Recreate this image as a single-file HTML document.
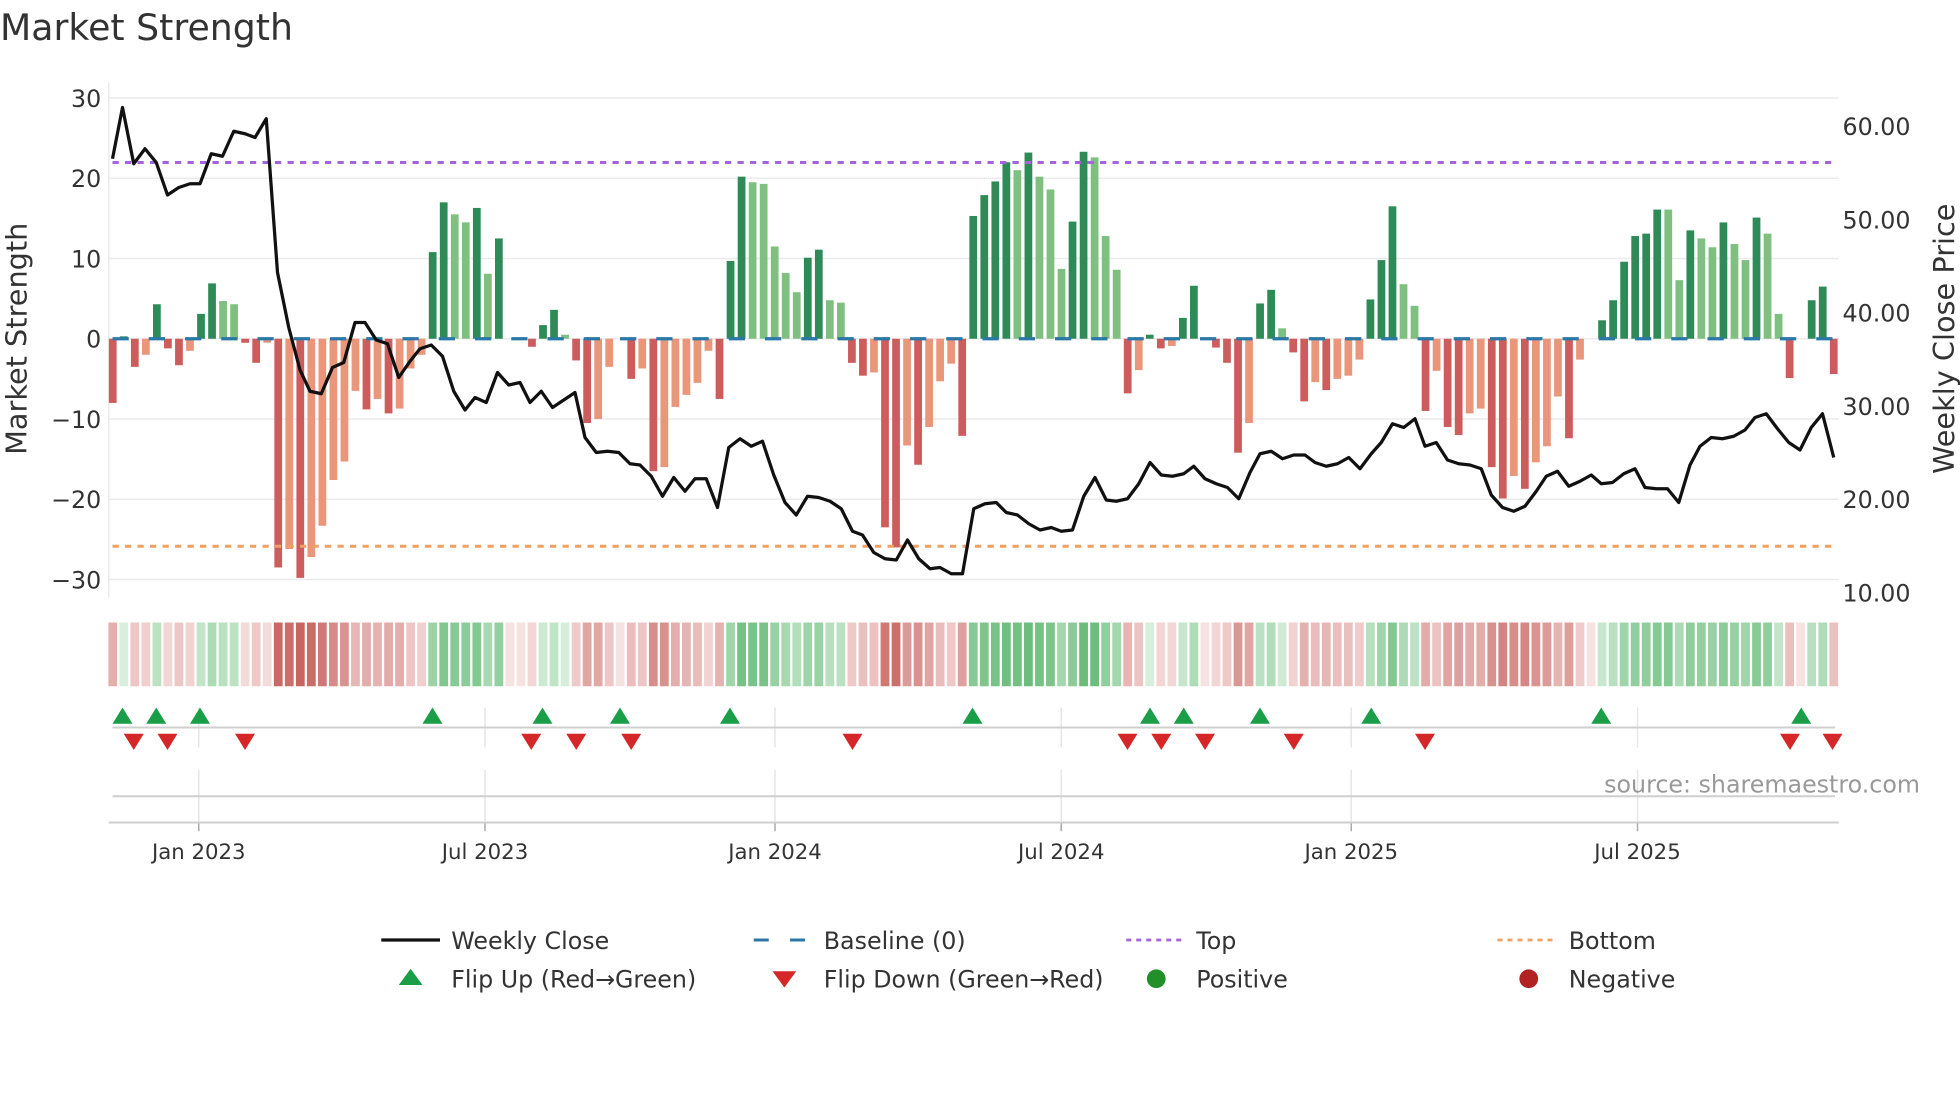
<!DOCTYPE html>
<html><head><meta charset="utf-8">
<style>
html,body{margin:0;padding:0;background:#fff;}
svg{display:block;font-family:"DejaVu Sans","Liberation Sans",sans-serif;}
</style></head>
<body>
<svg id="s" width="1960" height="1102" viewBox="0 0 1568 881.6" xmlns="http://www.w3.org/2000/svg">
<rect width="1568" height="881.6" fill="#fff"/>
<text x="0" y="32" font-size="29" fill="#333">Market Strength</text>
<g id="grid" stroke="#ebebeb" stroke-width="1.2"></g>
<line x1="87" y1="66" x2="87" y2="478" stroke="#ebebeb" stroke-width="1.2"/>
<g id="bars"></g>
<line x1="90" y1="271" x2="1470" y2="271" stroke="#2a78a8" stroke-width="2.6" stroke-dasharray="13,16"/>
<line x1="90" y1="130" x2="1470" y2="130" stroke="#a463dd" stroke-width="2.4" stroke-dasharray="5,5"/>
<line x1="90" y1="437" x2="1470" y2="437" stroke="#f0a060" stroke-width="2.4" stroke-dasharray="5,5"/>
<polyline id="price" fill="none" stroke="#111" stroke-width="2.6" stroke-linejoin="round"/>
<g id="ylab" font-size="19" fill="#333" text-anchor="end"></g>
<g id="rlab" font-size="19" fill="#333"></g>
<text transform="translate(21,271) rotate(-90)" font-size="23" fill="#333" text-anchor="middle">Market Strength</text>
<text transform="translate(1563,271) rotate(-90)" font-size="23" fill="#333" text-anchor="middle">Weekly Close Price</text>
<g id="strip"></g>
<g id="vgrid" stroke="#e6e6e6" stroke-width="1.2"></g>
<line x1="90" y1="582" x2="1468" y2="582" stroke="#cfcfcf" stroke-width="1.6"/>
<line x1="90" y1="637" x2="1468" y2="637" stroke="#cfcfcf" stroke-width="1.6"/>
<line x1="87" y1="658" x2="1471" y2="658" stroke="#cfcfcf" stroke-width="1.6"/>
<g id="tri"></g>
<g id="xlab" font-size="17" fill="#333" text-anchor="middle"></g>
<text x="1536" y="634" font-size="19" fill="#999" text-anchor="end">source: sharemaestro.com</text>
<g font-size="19" fill="#333">
<line x1="305" y1="752" x2="352" y2="752" stroke="#111" stroke-width="2.6"/>
<text x="361" y="759">Weekly Close</text>
<line x1="603" y1="752" x2="647" y2="752" stroke="#2a78a8" stroke-width="2.4" stroke-dasharray="12,17"/>
<text x="659" y="759">Baseline (0)</text>
<line x1="901" y1="752" x2="945" y2="752" stroke="#a463dd" stroke-width="2.2" stroke-dasharray="4,4"/>
<text x="957" y="759">Top</text>
<line x1="1198" y1="752" x2="1243" y2="752" stroke="#f0a060" stroke-width="2.2" stroke-dasharray="4,4"/>
<text x="1255" y="759">Bottom</text>
<polygon points="319,788 338,788 328.5,775" fill="#1a9e48"/>
<text x="361" y="790">Flip Up (Red→Green)</text>
<polygon points="618,777 637,777 627.5,790" fill="#d62728"/>
<text x="659" y="790">Flip Down (Green→Red)</text>
<circle cx="925" cy="783" r="7.5" fill="#22902a"/>
<text x="957" y="790">Positive</text>
<circle cx="1223" cy="783" r="7.5" fill="#b22222"/>
<text x="1255" y="790">Negative</text>
</g>
</svg>
<script>
var NS="http://www.w3.org/2000/svg";
function el(p,t,a,txt){var e=document.createElementNS(NS,t);for(var k in a)e.setAttribute(k,a[k]);if(txt!=null)e.textContent=txt;document.getElementById(p).appendChild(e);return e;}
var D=[[-8,1],[0.3,1],[-3.5,1],[-2,0],[4.3,1],[-1.2,1],[-3.3,1],[-1.5,0],[3.1,1],[6.9,1],[4.7,0],[4.3,0],[-0.5,1],[-3,1],[-0.5,0],[-28.5,1],[-26.2,0],[-29.8,1],[-27.2,0],[-23.3,0],[-17.6,0],[-15.3,0],[-6.5,0],[-8.8,1],[-7.5,0],[-9.3,1],[-8.7,0],[-3.7,0],[-2,0],[10.8,1],[17,1],[15.5,0],[14.5,0],[16.3,1],[8.1,0],[12.5,1],[0,1],[0,1],[-1,1],[1.7,1],[3.6,1],[0.5,0],[-2.7,1],
[-10.5,1],[-10,0],[-3.5,0],[0,1],[-5,1],[-3.7,0],[-16.5,1],[-16,0],[-8.5,0],[-7,0],[-5.5,0],[-1.5,0],[-7.5,1],[9.7,1],[20.2,1],[19.5,0],[19.3,0],[11.5,0],[8.2,0],[5.8,0],[10.1,1],[11.1,1],[4.8,0],[4.5,0],[-3,1],[-4.6,1],[-4.2,0],[-23.5,1],[-26,1],[-13.3,0],[-15.7,1],[-11,0],[-5.3,0],[-3.1,0],[-12.1,1],[15.3,1],[17.9,1],[19.6,1],[22,1],[21,0],[23.2,1],[20.2,0],[18.6,0],[8.7,0],
[14.6,1],[23.3,1],[22.6,0],[12.8,0],[8.6,0],[-6.8,1],[-3.9,0],[0.5,1],[-1.2,1],[-0.9,0],[2.6,1],[6.6,1],[0,1],[-1.1,1],[-3,1],[-14.2,1],[-10.5,0],[4.4,1],[6.1,1],[1.3,0],[-1.7,1],[-7.8,1],[-5.4,0],[-6.4,1],[-5,0],[-4.6,0],[-2.6,0],[4.9,1],[9.8,1],[16.5,1],[6.8,0],[4.1,0],[-9,1],[-4,0],[-11,1],[-12,1],[-9.3,0],[-8.7,0],[-16,1],[-19.9,1],[-17.1,0],[-18.7,1],[-15.4,0],[-13.4,0],[-7.2,0],[-12.4,1],[-2.6,0],[0,1],[2.3,1],[4.8,1],[9.6,1],[12.8,1],[13.1,1],[16.1,1],[16.1,0],[7.3,0],[13.5,1],[12.5,0],[11.4,0],[14.5,1],[11.8,0],[9.8,0],[15.1,1],[13.1,0],[3.1,0],[-4.9,1],[0,1],[4.8,1],[6.5,1],[-4.4,1]];
var x0=90.2,dx=(1467-90.2)/(D.length-1),Z=271,U=6.42,bw=6.2;
function lerp(a,b,t){var r=[];for(var i=0;i<3;i++)r.push(Math.round(a[i]+(b[i]-a[i])*t));return "rgb("+r.join(",")+")";}
for(var i=0;i<D.length;i++){
 var v=D[i][0],d=D[i][1],x=x0+i*dx;
 if(v!==0){
  var c=v>0?(d?"#2e8b57":"#7fbf7f"):(d?"#cd5c5c":"#e9967a");
  var h=Math.abs(v)*U;
  el("bars","rect",{x:x-bw/2,y:v>0?Z-h:Z,width:bw,height:h,fill:c});
 }
 var t,col;
 if(v>0){t=Math.min(1,Math.pow(v/23,0.7));col=lerp([222,242,226],[108,189,124],t);}
 else{t=Math.min(1,Math.pow(Math.abs(v)/30,0.7));col=lerp([247,226,226],[200,100,96],t);}
 el("strip","rect",{x:x-dx/2+0.9,y:498,width:dx-1.8,height:51,fill:col});
}
for(var g=-30;g<=30;g+=10){var y=Z-g*U;el("grid","line",{x1:87,y1:y,x2:1471,y2:y});
 el("ylab","text",{x:81,y:y+7},(g<0?"\u2212"+(-g):""+g));}
for(var p=10;p<=60;p+=10){var y=474-(p-10)*7.46;el("rlab","text",{x:1474,y:y+7},p.toFixed(2));}
var P=[[90,127],[98,86],[107,131],[116,119],[125,130],[134,156],[143,150],[152,147],[160,147],[169,123],[178,125],[187,105],[196,107],[204,110],[213,95],[222,218],[231,262],[240,296],[248,313],[257,315],[266,294],[275,290],[284,258],[292,258],[301,272],[310,275],[319,302],[328,289],[336,279],[345,276],[354,285],[363,313],[372,328],[380,318],[389,322],[398,298],[407,308],[416,306],[424,322],[433,313],[442,326],[451,320],[460,314],[468,350],[477,362],[486,361],[495,362],[504,371],[512,372],[521,381],[530,397],[539,382],[548,393],[556,383],[565,383],[574,406],[583,358],[592,351],[601,357],[610,353],[619,380],[628,402],[637,412],[646,397],[655,398],[664,401],[673,407],[682,425],[690,428],[699,442],[708,447],[717,448],[726,432],[735,447],[744,455],[752,454],[761,459],[770,459],[779,407],[788,403],[797,402],[805,410],[814,412],[823,419],[832,424],[841,422],[849,425],[858,424],[867,397],[876,382],[885,400],[893,401],[902,399],[911,387],[920,370],[929,380],[938,381],[947,379],[955,373],[964,383],[973,387],[982,390],[991,399],[1000,378],[1008,363],[1017,361],[1026,367],[1035,364],[1044,364],[1052,370],[1061,373],[1070,371],[1079,366],[1088,375],[1097,363],[1105,354],[1114,339],[1123,342],[1132,335],[1140,357],[1149,354],[1158,368],[1167,371],[1176,372],[1185,375],[1193,396],[1202,406],[1211,409],[1220,405],[1229,393],[1237,381],[1246,377],[1255,389],[1264,385],[1273,380],[1281,387],[1290,386],[1299,379],[1308,375],[1316,390],[1325,391],[1334,391],[1343,402],[1352,372],[1360,357],[1369,350],[1378,351],[1387,349],[1396,344],[1404,334],[1413,331],[1422,343],[1431,354],[1440,360],[1449,342],[1458,331],[1467,366]];
document.getElementById("price").setAttribute("points",P.map(function(q){return q.join(",");}).join(" "));
var T=[[159,"Jan 2023"],[388,"Jul 2023"],[620,"Jan 2024"],[849,"Jul 2024"],[1081,"Jan 2025"],[1310,"Jul 2025"]];
T.forEach(function(t){el("vgrid","line",{x1:t[0],y1:566,x2:t[0],y2:598});el("vgrid","line",{x1:t[0],y1:616,x2:t[0],y2:658});
 el("vgrid","line",{x1:t[0],y1:658,x2:t[0],y2:665,stroke:"#aaa"});el("xlab","text",{x:t[0],y:687},t[1]);});
[98,125,160,346,434,496,584,778,920,947,1008,1097,1281,1441].forEach(function(x){el("tri","polygon",{points:(x-8)+",579 "+(x+8)+",579 "+x+",566",fill:"#1a9e48"});});
[107,134,196,425,461,505,682,902,929,964,1035,1140,1432,1466].forEach(function(x){el("tri","polygon",{points:(x-8)+",587 "+(x+8)+",587 "+x+",600",fill:"#d62728"});});
</script>
</body></html>
